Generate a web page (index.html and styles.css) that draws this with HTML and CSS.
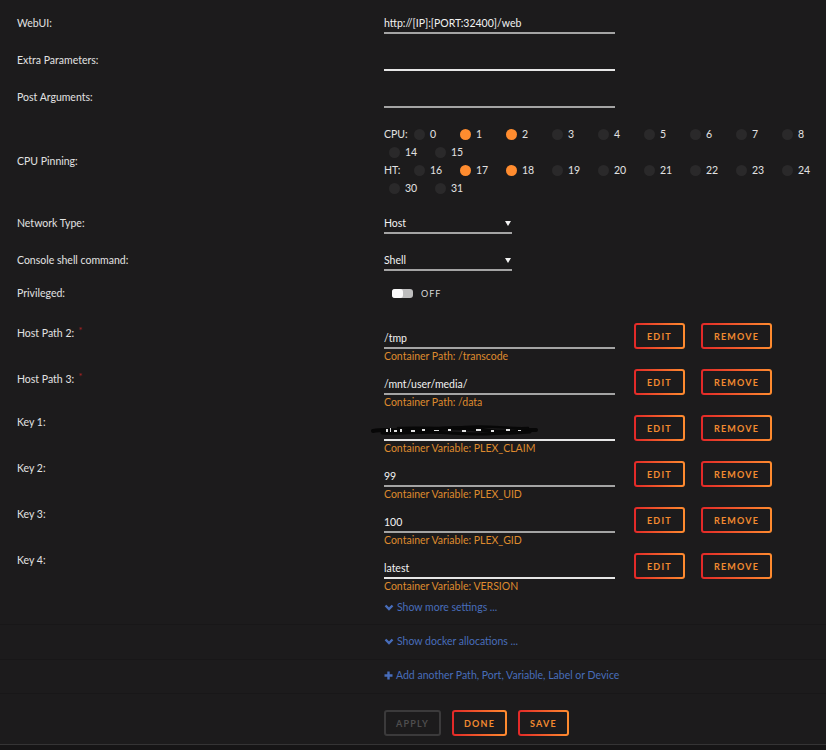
FILE: index.html
```html
<!DOCTYPE html>
<html>
<head>
<meta charset="utf-8">
<link rel="stylesheet" href="styles.css">
<title>Update Container</title>
</head>
<body>
  <div class="form">
    <div class="row">
      <div class="label">WebUI:</div>
      <div class="value"><div class="field">http://[IP]:[PORT:32400]/web</div></div>
    </div>
    <div class="row">
      <div class="label">Extra Parameters:</div>
      <div class="value"><div class="field empty"></div></div>
    </div>
    <div class="row">
      <div class="label">Post Arguments:</div>
      <div class="value"><div class="field"></div></div>
    </div>

    <div class="row cpu">
      <div class="label">CPU Pinning:</div>
      <div class="value">
        <div class="pins">
          <span class="pin-tag">CPU:</span>
          <span class="pin"><i class="dot"></i>0</span>
          <span class="pin"><i class="dot on"></i>1</span>
          <span class="pin"><i class="dot on"></i>2</span>
          <span class="pin"><i class="dot"></i>3</span>
          <span class="pin"><i class="dot"></i>4</span>
          <span class="pin"><i class="dot"></i>5</span>
          <span class="pin"><i class="dot"></i>6</span>
          <span class="pin"><i class="dot"></i>7</span>
          <span class="pin"><i class="dot"></i>8</span>
          <span class="pin"><i class="dot"></i>14</span>
          <span class="pin"><i class="dot"></i>15</span>
        </div>
        <div class="pins">
          <span class="pin-tag">HT:</span>
          <span class="pin"><i class="dot"></i>16</span>
          <span class="pin"><i class="dot on"></i>17</span>
          <span class="pin"><i class="dot on"></i>18</span>
          <span class="pin"><i class="dot"></i>19</span>
          <span class="pin"><i class="dot"></i>20</span>
          <span class="pin"><i class="dot"></i>21</span>
          <span class="pin"><i class="dot"></i>22</span>
          <span class="pin"><i class="dot"></i>23</span>
          <span class="pin"><i class="dot"></i>24</span>
          <span class="pin"><i class="dot"></i>30</span>
          <span class="pin"><i class="dot"></i>31</span>
        </div>
      </div>
    </div>

    <div class="row">
      <div class="label">Network Type:</div>
      <div class="value"><div class="field select">Host<i class="caret"></i></div></div>
    </div>
    <div class="row">
      <div class="label">Console shell command:</div>
      <div class="value"><div class="field select">Shell<i class="caret"></i></div></div>
    </div>
    <div class="row priv">
      <div class="label">Privileged:</div>
      <div class="value">
        <div class="switch"><span class="track"><span class="knob"></span></span>OFF</div>
      </div>
    </div>

    <div class="row path first">
      <div class="label">Host Path 2:<span class="req">*</span></div>
      <div class="value entry">
        <div class="stack">
          <div class="field">/tmp</div>
          <div class="hint">Container Path: /transcode</div>
        </div>
        <span class="btn">EDIT</span>
        <span class="btn">REMOVE</span>
      </div>
    </div>
    <div class="row path">
      <div class="label">Host Path 3:<span class="req">*</span></div>
      <div class="value entry">
        <div class="stack">
          <div class="field">/mnt/user/media/</div>
          <div class="hint">Container Path: /data</div>
        </div>
        <span class="btn">EDIT</span>
        <span class="btn">REMOVE</span>
      </div>
    </div>
    <div class="row path">
      <div class="label">Key 1:</div>
      <div class="value entry">
        <div class="stack">
          <div class="field light">
            <svg class="redact" width="172" height="16" viewBox="0 0 172 16">
              <g fill="none" stroke="#070707" stroke-linecap="round">
                <path d="M3 8 C20 5 40 10 60 7 S100 5 120 8 S150 6 166 7" stroke-width="4"/>
                <path d="M12 10 C30 11 55 8 80 10 S125 11 160 9" stroke-width="3"/>
                <path d="M28 5 C50 4 70 6 95 4 S135 6 158 5" stroke-width="2.5"/>
              </g>
              <g fill="#e0e0e0">
                <rect x="16" y="6" width="2" height="3"/>
                <rect x="20" y="5" width="1" height="4"/>
                <rect x="24" y="7" width="3" height="2"/>
                <rect x="30" y="6" width="2" height="3"/>
                <rect x="41" y="7" width="4" height="2"/>
                <rect x="52" y="6" width="3" height="2"/>
                <rect x="64" y="7" width="5" height="1"/>
                <rect x="78" y="6" width="3" height="2"/>
                <rect x="92" y="7" width="4" height="2"/>
                <rect x="106" y="6" width="5" height="2"/>
                <rect x="121" y="7" width="3" height="2"/>
                <rect x="136" y="6" width="4" height="2"/>
                <rect x="148" y="7" width="3" height="1"/>
              </g>
            </svg>
          </div>
          <div class="hint">Container Variable: PLEX_CLAIM</div>
        </div>
        <span class="btn">EDIT</span>
        <span class="btn">REMOVE</span>
      </div>
    </div>
    <div class="row path">
      <div class="label">Key 2:</div>
      <div class="value entry">
        <div class="stack">
          <div class="field">99</div>
          <div class="hint">Container Variable: PLEX_UID</div>
        </div>
        <span class="btn">EDIT</span>
        <span class="btn">REMOVE</span>
      </div>
    </div>
    <div class="row path">
      <div class="label">Key 3:</div>
      <div class="value entry">
        <div class="stack">
          <div class="field">100</div>
          <div class="hint">Container Variable: PLEX_GID</div>
        </div>
        <span class="btn">EDIT</span>
        <span class="btn">REMOVE</span>
      </div>
    </div>
    <div class="row path">
      <div class="label">Key 4:</div>
      <div class="value entry">
        <div class="stack">
          <div class="field light">latest</div>
          <div class="hint">Container Variable: VERSION</div>
        </div>
        <span class="btn">EDIT</span>
        <span class="btn">REMOVE</span>
      </div>
    </div>

    <div class="row more">
      <div class="label"></div>
      <div class="value">
        <a class="link" href="#"><svg class="chev" width="10" height="7" viewBox="0 0 10 7"><polyline points="1.5,1.5 5,5 8.5,1.5" fill="none" stroke="#486dba" stroke-width="2.4"/></svg>Show more settings ...</a>
      </div>
    </div>
  </div>

  <div class="band">
    <a class="link" href="#"><svg class="chev" width="10" height="7" viewBox="0 0 10 7"><polyline points="1.5,1.5 5,5 8.5,1.5" fill="none" stroke="#486dba" stroke-width="2.4"/></svg>Show docker allocations ...</a>
  </div>
  <div class="band">
    <a class="link" href="#"><svg class="plus" width="9" height="9" viewBox="0 0 9 9"><path d="M4.5 0.5v8M0.5 4.5h8" stroke="#486dba" stroke-width="2.4"/></svg>Add another Path, Port, Variable, Label or Device</a>
  </div>
  <div class="band actions">
    <span class="btn off">APPLY</span>
    <span class="btn">DONE</span>
    <span class="btn">SAVE</span>
  </div>
  <div class="foot"></div>
</body>
</html>
```

FILE: styles.css
```css
html, body { margin: 0; background: #1c1b1c; }
body { font-family: Lato, "Noto Sans", sans-serif; font-size: 10.5px; color: #e2e2e2; height: 750px; overflow: hidden; }
a { text-decoration: none; }

.form { padding-top: 15px; }
.row { display: flex; align-items: flex-start; margin-top: 18px; }
.row:first-child { margin-top: 0; }
.label { flex: none; width: 384px; padding-left: 17px; box-sizing: border-box; line-height: 16px; }
.value { flex: 1; min-width: 0; }

.field { position: relative; width: 231px; height: 19px; box-sizing: border-box; line-height: 17px; color: #f2f2f2; border-bottom: 2px solid #a4a4a4; }
.field.empty, .field.light { border-bottom-color: #e6e6e6; }
.select { width: 128px; display: flex; justify-content: space-between; }
.caret { width: 0; height: 0; margin: 6px 1px 0 0; border-left: 3px solid transparent; border-right: 3px solid transparent; border-top: 5px solid #f2f2f2; }
.redact { position: absolute; left: -14px; top: 1px; }

/* cpu pinning */
.row.cpu { align-items: center; margin-top: 17px; }
.pins { display: flex; flex-wrap: wrap; width: 442px; line-height: 18px; }
.pin-tag { width: 25px; }
.pin { display: flex; align-items: center; width: 46px; }
.dot { width: 11px; height: 11px; border-radius: 50%; background: #2a292a; margin: 0 5px; }
.dot.on { background: #ff8c2f; }

/* privileged switch */
.row.priv { margin-top: 14px; }
.switch { display: flex; align-items: center; gap: 8px; margin-left: 8px; height: 16px; font-size: 9px; letter-spacing: 1px; color: #d8d8d8; }
.track { display: block; width: 21px; height: 9px; border-radius: 3px; background: #bdbdbd; }
.knob { display: block; width: 11px; height: 9px; border-radius: 3px; background: #fafafa; }

/* host paths and variables */
.row.path { margin-top: 5px; }
.row.path.first { margin-top: 21px; }
.req { color: #a32424; font-size: 10px; margin-left: 4px; vertical-align: 3px; }
.entry { display: flex; align-items: flex-start; }
.stack { width: 231px; padding-top: 8px; }
.hint { color: #de8a2e; line-height: 14px; }
.entry .btn { margin: 1px 0 0 16px; }
.entry .btn:first-of-type { margin-left: 19px; }

.btn { display: inline-flex; align-items: center; justify-content: center; height: 26px; padding: 0 11px; box-sizing: border-box; border: 2px solid transparent; border-radius: 3px; background: linear-gradient(#1c1b1c, #1c1b1c) padding-box, linear-gradient(90deg, #e22828, #ff8c2f) border-box; color: #f28a30; font-size: 9px; font-weight: 700; letter-spacing: 1.2px; }
.btn.off { background: #1c1b1c; border-color: #3b3a3b; color: #4e4d4e; }
.actions .btn { padding: 0 10px; }

.link { display: inline-flex; align-items: center; gap: 3px; color: #486dba; line-height: 16px; }
.row.more { margin-top: 6px; }

.band { border-top: 1px solid #181718; padding: 7px 0 10px 384px; }
.form + .band { margin-top: 9px; padding-top: 8px; }
.band.actions { display: flex; gap: 11px; padding-top: 16px; padding-bottom: 8px; }
.foot { border-top: 1px solid #353435; height: 10px; background: #161516; }
```
